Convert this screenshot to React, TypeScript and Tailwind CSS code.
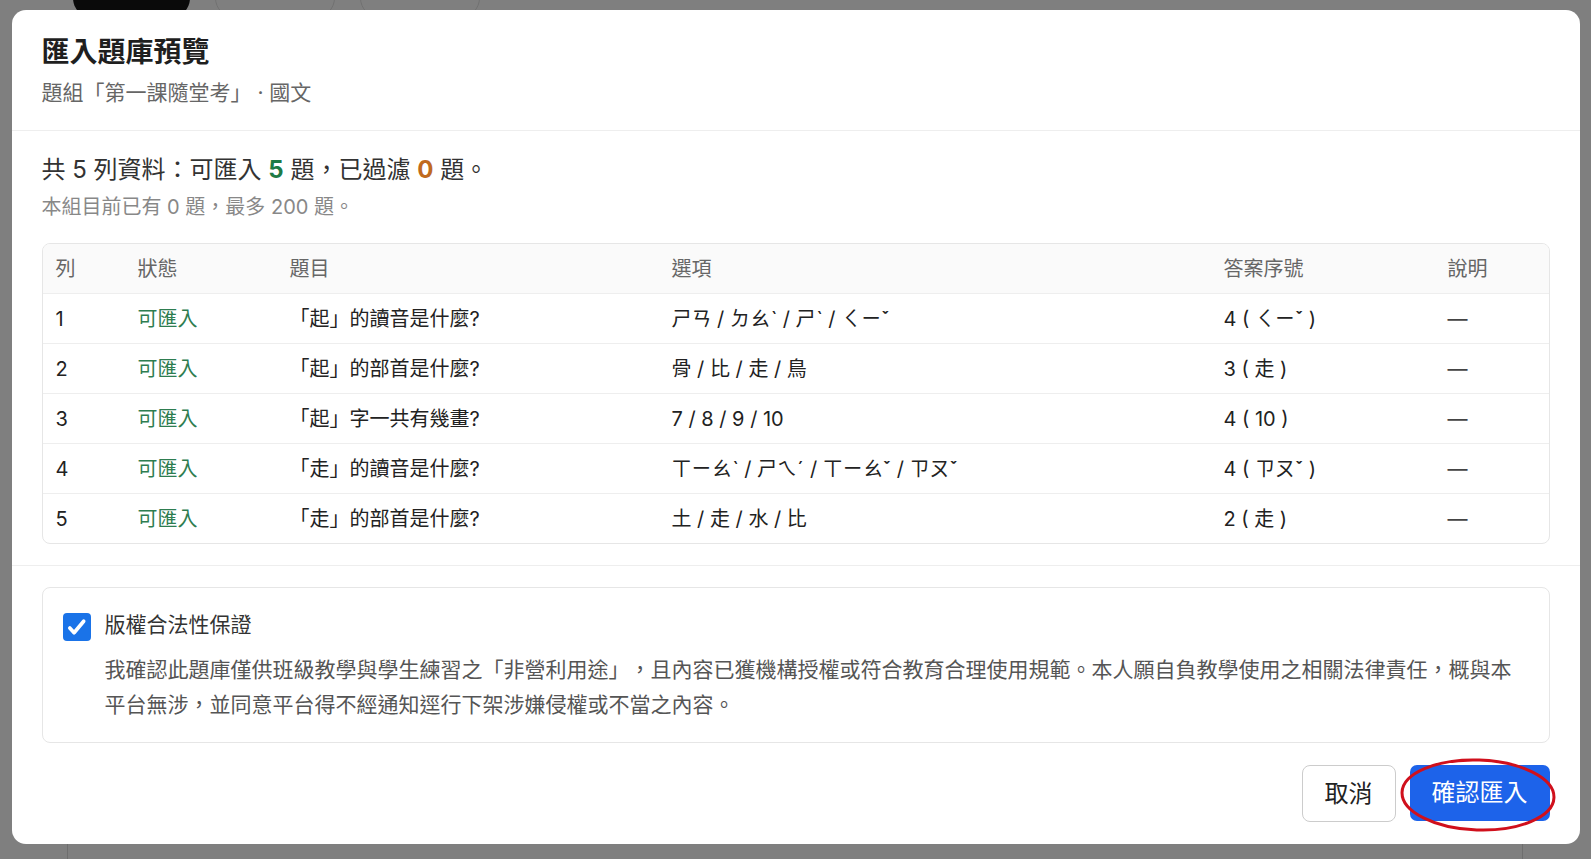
import React from "react";

const rows = [
  { n: 1, q: "「起」的讀音是什麼?", opts: "ㄕㄢ / ㄉㄠˋ / ㄕˋ / ㄑㄧˇ", ans: "4 ( ㄑㄧˇ )" },
  { n: 2, q: "「起」的部首是什麼?", opts: "骨 / 比 / 走 / 鳥", ans: "3 ( 走 )" },
  { n: 3, q: "「起」字一共有幾畫?", opts: "7 / 8 / 9 / 10", ans: "4 ( 10 )" },
  { n: 4, q: "「走」的讀音是什麼?", opts: "ㄒㄧㄠˋ / ㄕㄟˊ / ㄒㄧㄠˇ / ㄗㄡˇ", ans: "4 ( ㄗㄡˇ )" },
  { n: 5, q: "「走」的部首是什麼?", opts: "土 / 走 / 水 / 比", ans: "2 ( 走 )" },
];

const cols = "grid grid-cols-[82px_152px_382px_552px_224px_1fr]";

function PreviewTable() {
  return (
    <div className="mt-[22px] rounded-[8px] border border-[#e6e6e6] overflow-hidden text-[20px]">
      <div className={`${cols} h-[49px] items-center bg-[#fafafa] text-[#666]`}>
        {["列", "狀態", "題目", "選項", "答案序號", "說明"].map((h) => (
          <div key={h} className="px-[13px]">{h}</div>
        ))}
      </div>
      {rows.map((r) => (
        <div key={r.n} className={`${cols} h-[50px] items-center border-t border-[#eeeeee] text-[#222]`}>
          <div className="px-[13px]">{r.n}</div>
          <div className="px-[13px] text-[#2e7d50]">可匯入</div>
          <div className="px-[13px] whitespace-nowrap">{r.q}</div>
          <div className="px-[13px] whitespace-nowrap">{r.opts}</div>
          <div className="px-[13px] whitespace-nowrap">{r.ans}</div>
          <div className="px-[13px] text-[#444]">—</div>
        </div>
      ))}
    </div>
  );
}

function CopyrightNotice() {
  return (
    <div className="flex items-start gap-[14px] rounded-[8px] border border-[#e6e6e6] pl-[20px] pr-[24px] pt-[23px] pb-[20px]">
      <div className="mt-[2px] w-[28px] h-[28px] shrink-0 rounded-[4px] bg-[#1a73e8] grid place-items-center">
        <svg viewBox="0 0 24 24" className="w-[23px] h-[23px]" fill="none" stroke="white" strokeWidth="3.8" strokeLinecap="round" strokeLinejoin="round">
          <path d="M5 12.5l4.5 5L19.5 5.5" />
        </svg>
      </div>
      <div className="flex-1">
        <p className="text-[21px] leading-[28px] text-[#333]">版權合法性保證</p>
        <p className="mt-[13px] text-[21px] leading-[35px] text-[#555]">
          我確認此題庫僅供班級教學與學生練習之「非營利用途」，且內容已獲機構授權或符合教育合理使用規範。本人願自負教學使用之相關法律責任，概與本平台無涉，並同意平台得不經通知逕行下架涉嫌侵權或不當之內容。
        </p>
      </div>
    </div>
  );
}

export default function App() {
  return (
    <div className="relative h-[859px] w-full overflow-hidden bg-white font-[Inter,'Noto_Sans_CJK_TC',sans-serif] [text-spacing-trim:space-all]">
      {/* page underneath */}
      <div className="-mt-[22px] flex gap-[25px] pl-[73px]">
        <div className="h-[40px] w-[117px] rounded-full bg-[#151515]" />
        <div className="h-[40px] w-[120px] rounded-full border border-[#e2e2e2]" />
        <div className="h-[40px] w-[120px] rounded-full border border-[#e2e2e2]" />
      </div>
      <div className="mt-[30px] ml-[67px] w-[1456px] h-[900px] border border-[#dcdcdc]" />

      {/* modal */}
      <div className="fixed inset-0 bg-black/50 flex justify-center pt-[10px]">
        <div className="w-[1568px] h-[834px] bg-white rounded-[14px] flex flex-col">
          <div className="px-[30px] pt-[24px] pb-[23px] border-b border-[#eeeeee]">
            <h1 className="text-[28px] leading-[36px] font-bold text-[#1f1f1f]">匯入題庫預覽</h1>
            <p className="mt-[9px] text-[21px] leading-[28px] text-[#666]">題組「第一課隨堂考」 · 國文</p>
          </div>

          <div className="px-[30px] pt-[23px] pb-[21px] border-b border-[#eeeeee]">
            <p className="text-[24px] leading-[32px] text-[#333]">
              共 5 列資料：可匯入 <span className="font-bold text-[#1e7b46]">5</span> 題，已過濾{" "}
              <span className="font-bold text-[#c06a1e]">0</span> 題。
            </p>
            <p className="mt-[7px] text-[20px] leading-[28px] text-[#888]">本組目前已有 0 題，最多 200 題。</p>
            <PreviewTable />
          </div>

          <div className="px-[30px] pt-[21px] pb-[22px] flex flex-col">
            <CopyrightNotice />
            <div className="mt-[22px] flex justify-end gap-[14px]">
              <button className="h-[57px] px-[22px] rounded-[8px] border border-[#cccccc] text-[24px] text-[#222] bg-white">
                取消
              </button>
              <div className="relative">
                <button className="h-[56px] px-[22px] rounded-[7px] bg-[#1d63ea] text-[24px] text-white">
                  確認匯入
                </button>
                <svg className="absolute -left-[10px] -top-[7px] w-[156px] h-[74px] overflow-visible pointer-events-none" viewBox="0 0 156 74" fill="none">
                  <ellipse cx="78" cy="37" rx="76" ry="35" stroke="#d0101c" strokeWidth="3" transform="rotate(2 78 37)" />
                </svg>
              </div>
            </div>
          </div>
        </div>
      </div>
    </div>
  );
}
